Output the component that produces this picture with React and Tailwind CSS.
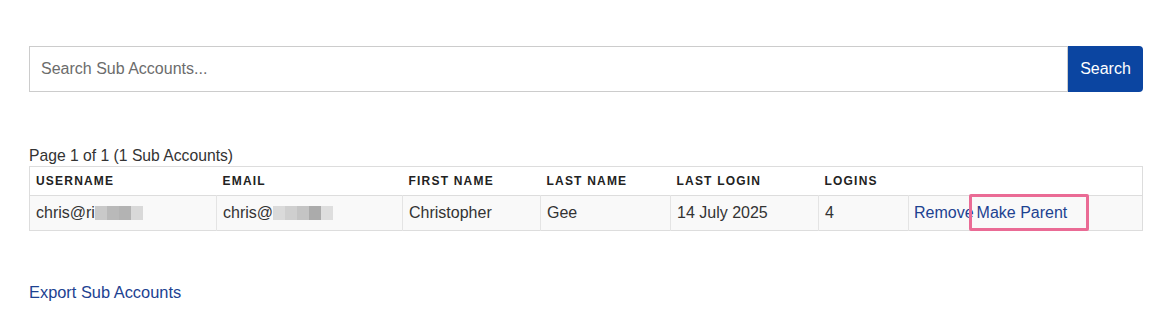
import React from 'react';

const font = { fontFamily: '"Liberation Sans", Arial, sans-serif' };

function Blur({ blocks }) {
    return (
        <span className="inline-flex items-center align-middle h-[14px]">
            {blocks.map((c, i) => (
                <span key={i} className="inline-block h-[14px] w-[12px]" style={{ background: c }} />
            ))}
        </span>
    );
}

export default function App() {
    return (
        <div className="w-[1169px] h-[314px] bg-white text-[#333] pl-[29px] pr-[26px] pt-[46px]" style={font}>
            {/* search bar */}
            <div className="flex h-[46px]">
                <input
                    className="flex-1 border border-[#cccccc] px-[11px] text-[16px] text-[#333] placeholder:text-[#6c6c6c] outline-none"
                    placeholder="Search Sub Accounts..."
                />
                <button className="w-[75px] bg-[#0b45a1] text-white text-[16px] rounded-r-[4px]">
                    Search
                </button>
            </div>

            <div className="mt-[55px] text-[15.7px] leading-[18px] text-[#333]">Page 1 of 1 (1 Sub Accounts)</div>

            <table className="mt-[1px] w-full border-collapse border border-[#dddddd] text-[16px]">
                <thead>
                    <tr className="h-[29px] text-left text-[12px] font-bold uppercase tracking-[1.2px] text-[#222]">
                        <th className="pl-[6px] w-[187px]">Username</th>
                        <th className="pl-[6px] w-[186px]">Email</th>
                        <th className="pl-[6px] w-[138px]">First Name</th>
                        <th className="pl-[6px] w-[130px]">Last Name</th>
                        <th className="pl-[6px] w-[148px]">Last Login</th>
                        <th className="pl-[6px] w-[90px]">Logins</th>
                        <th></th>
                    </tr>
                </thead>
                <tbody>
                    <tr className="h-[35px] bg-[#f9f9f9] text-[#333] border-t border-[#dddddd]">
                        <td className="pl-[6px] border-r border-[#e4e4e4]">
                            <span className="inline-flex items-center">
                                chris@ri
                                <Blur blocks={['#c9c9c9', '#b9b9b9', '#b3b3b3', '#d9d9d9']} />
                            </span>
                        </td>
                        <td className="pl-[6px] border-r border-[#e4e4e4]">
                            <span className="inline-flex items-center">
                                chris@
                                <Blur blocks={['#dadada', '#cfcfcf', '#c4c4c4', '#ababab', '#dedede']} />
                            </span>
                        </td>
                        <td className="pl-[6px] border-r border-[#e4e4e4]">Christopher</td>
                        <td className="pl-[6px] border-r border-[#e4e4e4]">Gee</td>
                        <td className="pl-[6px] border-r border-[#e4e4e4]">14 July 2025</td>
                        <td className="pl-[6px] border-r border-[#e4e4e4]">4</td>
                        <td className="relative pl-[5px] whitespace-nowrap text-[#1d4291]">
                            <a href="#">Remove</a>
                            <a href="#" className="ml-[3px]">Make Parent</a>
                            <span className="absolute left-[60px] top-[-2px] w-[120px] h-[37px] border-[3px] border-[#ea6b95] rounded-[2px] pointer-events-none" />
                        </td>
                    </tr>
                </tbody>
            </table>

            <div className="mt-[49px] text-[16.4px] text-[#1d4291]">
                <a href="#">Export Sub Accounts</a>
            </div>
        </div>
    );
}
